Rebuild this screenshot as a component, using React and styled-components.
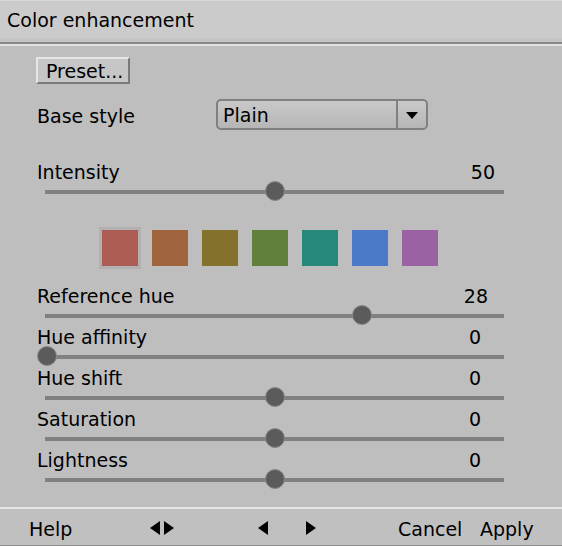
import styled, { createGlobalStyle } from "styled-components";

const GlobalStyle = createGlobalStyle`
  html, body {
    margin: 0;
    padding: 0;
    background: #bebebe;
  }
  body {
    font-family: "DejaVu Sans", "Liberation Sans", sans-serif;
    font-size: 19px;
    line-height: 21px;
    color: #000;
  }
`;

const swatches = ["#ac5c52", "#a0653e", "#84722c", "#5f7f3a", "#26877b", "#4a7ac8", "#9a62a3"];

const sliders = [
  { label: "Reference hue", value: "28", pos: 0.69, pad: 25 },
  { label: "Hue affinity", value: "0", pos: 0, pad: 32 },
  { label: "Hue shift", value: "0", pos: 0.5, pad: 32 },
  { label: "Saturation", value: "0", pos: 0.5, pad: 32 },
  { label: "Lightness", value: "0", pos: 0.5, pad: 32 },
];

const Triangle = ({ dir }) => (
  <svg width="10" height="14" viewBox="0 0 10 14">
    {dir === "left" ? (
      <polygon points="10,0 10,14 0,7" fill="#000" />
    ) : (
      <polygon points="0,0 0,14 10,7" fill="#000" />
    )}
  </svg>
);

const Slider = ({ label, value, pos, pad }) => (
  <SliderRow>
    <SliderHead>
      <span>{label}</span>
      <Value $pad={pad}>{value}</Value>
    </SliderHead>
    <Track>
      <Thumb style={{ left: `calc(${pos} * (100% - 20px))` }} />
    </Track>
  </SliderRow>
);

const App = () => {
  return (
    <Window>
      <GlobalStyle />
      <TitleBar>Color enhancement</TitleBar>
      <TitleRule />
      <Content>
        <PresetButton>Preset...</PresetButton>
        <BaseRow>
          <BaseLabel>Base style</BaseLabel>
          <Dropdown>
            <DropdownText>Plain</DropdownText>
            <DropdownArrow>
              <svg width="12" height="7" viewBox="0 0 12 7">
                <polygon points="0,0 12,0 6,7" fill="#000" />
              </svg>
            </DropdownArrow>
          </Dropdown>
        </BaseRow>
        <IntensityRow>
          <Slider label="Intensity" value="50" pos={0.5} pad={18} />
        </IntensityRow>
        <Swatches>
          {swatches.map((c, i) => (
            <SwatchFrame key={c} $selected={i === 0}>
              <Swatch $color={c} />
            </SwatchFrame>
          ))}
        </Swatches>
        <SliderList>
          {sliders.map((s) => (
            <Slider key={s.label} {...s} />
          ))}
        </SliderList>
      </Content>
      <Footer>
        <span>Help</span>
        <Arrows>
          <Triangle dir="left" />
          <Triangle dir="right" />
        </Arrows>
        <Arrows>
          <Triangle dir="left" />
        </Arrows>
        <Arrows>
          <Triangle dir="right" />
        </Arrows>
        <span>Cancel</span>
        <span>Apply</span>
      </Footer>
    </Window>
  );
};

export default App;

const Window = styled.div`
  width: 562px;
  height: 546px;
  display: flex;
  flex-direction: column;
  background: #bebebe;
  overflow: hidden;
`;

const TitleBar = styled.div`
  height: 38px;
  box-sizing: border-box;
  padding: 9px 0 0 7px;
  background: #cbcbcb;
  border-top: 1px solid #d9d9d9;
`;

const TitleRule = styled.div`
  height: 4px;
  background: #c4c4c4;
  border-bottom: 2px solid #888888;
  box-shadow: 0 2px 0 #e0e0e0;
  margin-bottom: 2px;
`;

const Content = styled.div`
  flex: 1;
  padding: 11px 0 0 37px;
`;

const PresetButton = styled.div`
  width: 94px;
  height: 27px;
  box-sizing: border-box;
  margin-left: -1px;
  padding: 2px 0 0 8px;
  background: #c6c6c6;
  border-top: 2px solid #e6e6e6;
  border-left: 2px solid #e6e6e6;
  border-bottom: 2px solid #7a7a7a;
  border-right: 2px solid #7a7a7a;
`;

const BaseRow = styled.div`
  display: grid;
  grid-template-columns: 179px 212px;
  align-items: center;
  margin-top: 15px;
`;

const BaseLabel = styled.div`
  padding-top: 4px;
`;

const Dropdown = styled.div`
  height: 31px;
  box-sizing: border-box;
  display: flex;
  border: 2px solid #808080;
  border-radius: 5px;
  background: linear-gradient(#c9c9c9, #b6b6b6);
`;

const DropdownText = styled.div`
  flex: 1;
  padding: 4px 0 0 5px;
`;

const DropdownArrow = styled.div`
  width: 28px;
  display: flex;
  align-items: center;
  justify-content: center;
  border-left: 2px solid #808080;
  padding-top: 1px;
`;

const IntensityRow = styled.div`
  margin-top: 32px;
`;

const SliderRow = styled.div`
  width: 476px;
`;

const SliderHead = styled.div`
  display: flex;
  justify-content: space-between;
  height: 21px;
`;

const Value = styled.span`
  padding-right: ${(p) => p.$pad}px;
`;

const Track = styled.div`
  position: relative;
  height: 20px;
  margin-top: -2px;

  &::before {
    content: "";
    position: absolute;
    left: 8px;
    right: 9px;
    top: 9px;
    height: 4px;
    background: #808080;
  }
`;

const Thumb = styled.div`
  position: absolute;
  top: 0;
  width: 20px;
  height: 20px;
  box-sizing: border-box;
  border-radius: 50%;
  background: #5b5b5b;
  border: 1px solid #8a8a8a;
`;

const Swatches = styled.div`
  display: flex;
  gap: 8px;
  margin: 26px 0 0 62px;
`;

const SwatchFrame = styled.div`
  width: 42px;
  height: 42px;
  display: flex;
  align-items: center;
  justify-content: center;
  background: ${(p) => (p.$selected ? "#b1b1b1" : "transparent")};
`;

const Swatch = styled.div`
  width: 36px;
  height: 36px;
  background: ${(p) => p.$color};
`;

const SliderList = styled.div`
  display: flex;
  flex-direction: column;
  gap: 2px;
  margin-top: 17px;
`;

const Footer = styled.div`
  height: 39px;
  box-sizing: border-box;
  display: grid;
  grid-template-columns: 121px 108px 48px 92px 82px auto;
  align-items: start;
  padding: 10px 0 0 29px;
  background: #c0c0c0;
  border-top: 2px solid #e6e6e6;
  border-bottom: 1px solid #8c8c8c;
`;

const Arrows = styled.div`
  display: flex;
  gap: 4px;
  margin-top: 2px;
`;
